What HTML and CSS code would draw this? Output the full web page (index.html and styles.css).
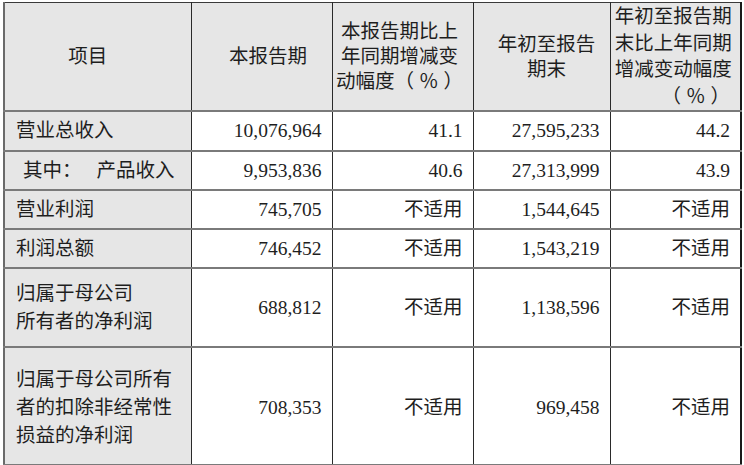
FILE: index.html
```html
<!DOCTYPE html>
<html lang="zh-CN">
<head>
<meta charset="utf-8">
<title>主要会计数据</title>
<link rel="stylesheet" href="styles.css">
</head>
<body>
<div class="wrap">
<table class="fin">
  <colgroup>
    <col class="c1"><col class="c2"><col class="c3"><col class="c4"><col class="c5">
  </colgroup>
  <thead>
    <tr class="r-head">
      <th class="h1">项目</th>
      <th class="h2">本报告期</th>
      <th class="h3">本报告期比上<br>年同期增减变<br>动幅度（<span class="pc">％</span>）</th>
      <th class="h4">年初至报告<br>期末</th>
      <th class="h5">年初至报告期<br>末比上年同期<br>增减变动幅度<br><span class="pct">（<span class="pc pc-s">％</span>）</span></th>
    </tr>
  </thead>
  <tbody>
    <tr class="r1">
      <td class="item">营业总收入</td>
      <td class="num">10,076,964</td>
      <td class="num">41.1</td>
      <td class="num">27,595,233</td>
      <td class="num">44.2</td>
    </tr>
    <tr class="r2">
      <td class="item sub">其中：<span class="gap">产品收入</span></td>
      <td class="num">9,953,836</td>
      <td class="num">40.6</td>
      <td class="num">27,313,999</td>
      <td class="num">43.9</td>
    </tr>
    <tr class="r3">
      <td class="item">营业利润</td>
      <td class="num">745,705</td>
      <td class="num">不适用</td>
      <td class="num">1,544,645</td>
      <td class="num">不适用</td>
    </tr>
    <tr class="r4">
      <td class="item">利润总额</td>
      <td class="num">746,452</td>
      <td class="num">不适用</td>
      <td class="num">1,543,219</td>
      <td class="num">不适用</td>
    </tr>
    <tr class="r5">
      <td class="item">归属于母公司<br>所有者的净利润</td>
      <td class="num">688,812</td>
      <td class="num">不适用</td>
      <td class="num">1,138,596</td>
      <td class="num">不适用</td>
    </tr>
    <tr class="r6">
      <td class="item">归属于母公司所有<br>者的扣除非经常性<br>损益的净利润</td>
      <td class="num">708,353</td>
      <td class="num">不适用</td>
      <td class="num">969,458</td>
      <td class="num">不适用</td>
    </tr>
  </tbody>
</table>
</div>
</body>
</html>
```
FILE: styles.css
```css
html, body {
  margin: 0;
  padding: 0;
  background: #ffffff;
}

.wrap {
  padding: 2px 0 0 3px;
}

.fin {
  border-collapse: collapse;
  table-layout: fixed;
  width: 737px;
  font-family: "Liberation Serif", "Noto Sans CJK SC", serif;
  font-size: 19.5px;
  color: #1e1e1e;
}

.c1 { width: 187px; }
.c2 { width: 141px; }
.c3 { width: 141px; }
.c4 { width: 137px; }
.c5 { width: 131px; }

.fin th,
.fin td {
  border-left: 1px solid #2a2a2a;
  border-right: 1px solid #2a2a2a;
  border-top: 2px solid #7a7a7a;
  border-bottom: 2px solid #7a7a7a;
  padding: 0;
  overflow: hidden;
  white-space: nowrap;
}

.fin th {
  background: #e6e6e6;
  font-weight: normal;
  text-align: center;
  vertical-align: middle;
  line-height: 25px;
  border-top: 1px solid #3a3a3a;
}

.fin th.h1 {
  border-left: 2px solid #6a6a6a;
  padding-right: 20px;
}
.fin th.h2 { padding-left: 13px; }
.fin th.h3 { padding-right: 6px; }
.fin th.h4 { padding-left: 10px; }
.fin th.h5 {
  line-height: 26.5px;
  padding-right: 4px;
  vertical-align: top;
  padding-top: 1px;
}
.pct {
  display: block;
  text-align: right;
  padding-right: 6px;
}
.pc {
  margin: 0 5px;
}
.pc-s {
  margin: 0 5px;
}

.r-head { height: 104px; }
.r1 { height: 40px; }
.r2 { height: 39px; }
.r3 { height: 39px; }
.r4 { height: 39px; }
.r5 { height: 79px; }
.r6 { height: 118px; }

.fin td {
  vertical-align: middle;
  line-height: 28px;
}

.fin td.item {
  background: #e6e6e6;
  border-left: 2px solid #6a6a6a;
  text-align: left;
  padding-left: 11px;
}

.fin td.sub {
  padding-left: 18px;
}

.gap {
  margin-left: 15px;
}

.fin td.num {
  text-align: right;
  padding-right: 10px;
  background: #ffffff;
}

.fin td:last-child,
.fin th:last-child {
  border-right: 2px solid #1a1a1a;
}

.r6 td {
  padding-top: 4px;
}
```
